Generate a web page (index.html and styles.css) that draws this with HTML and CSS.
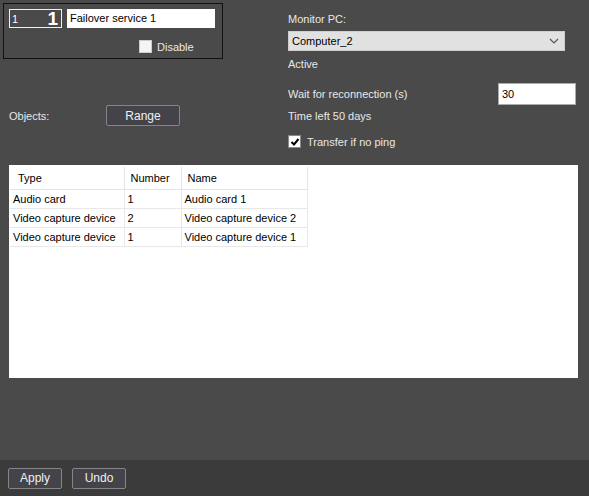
FILE: index.html
```html
<!DOCTYPE html>
<html>
<head>
<meta charset="utf-8">
<link rel="stylesheet" href="styles.css">
</head>
<body>
<div class="page">
  <div class="main">
    <div class="top">
      <div class="left">
        <div class="idbox">
          <div class="idrow">
            <div class="numfield"><span class="nsmall">1</span><span class="nbig">1</span></div>
            <div class="namefield">Failover service 1</div>
          </div>
          <div class="disrow">
            <span class="cb"></span><span class="lbl">Disable</span>
          </div>
        </div>
        <div class="objrow">
          <span class="lbl objlbl">Objects:</span>
          <button class="btn range">Range</button>
        </div>
      </div>
      <div class="right">
        <div class="lbl monlbl">Monitor PC:</div>
        <div class="select"><span>Computer_2</span>
          <svg class="chev" width="10" height="6" viewBox="0 0 10 6"><path d="M1 1 L5 5 L9 1" fill="none" stroke="#555" stroke-width="1.2"/></svg>
        </div>
        <div class="lbl active">Active</div>
        <div class="waitrow">
          <span class="lbl">Wait for reconnection (s)</span>
          <div class="numinput">30</div>
        </div>
        <div class="lbl timeleft">Time left 50 days</div>
        <div class="pingrow">
          <span class="cb checked"><svg width="10" height="10" viewBox="0 0 10 10"><path d="M1.5 5 L4 7.5 L8.5 2" fill="none" stroke="#000" stroke-width="2"/></svg></span>
          <span class="lbl">Transfer if no ping</span>
        </div>
      </div>
    </div>
    <div class="tablewrap">
      <table class="grid">
        <colgroup><col class="c1"><col class="c2"><col class="c3"></colgroup>
        <thead>
          <tr><th class="h1">Type</th><th class="h2">Number</th><th class="h3">Name</th></tr>
        </thead>
        <tbody>
          <tr><td>Audio card</td><td>1</td><td>Audio card 1</td></tr>
          <tr><td>Video capture device</td><td>2</td><td>Video capture device 2</td></tr>
          <tr><td>Video capture device</td><td>1</td><td>Video capture device 1</td></tr>
        </tbody>
      </table>
    </div>
  </div>
  <div class="footer">
    <button class="btn fbtn">Apply</button>
    <button class="btn fbtn">Undo</button>
  </div>
</div>
</body>
</html>
```
FILE: styles.css
```css
html, body {
  margin: 0;
  padding: 0;
}
body {
  background: #4a4a4a;
  font-family: "Liberation Sans", Arial, sans-serif;
  font-size: 11px;
  color: #e6e6e6;
}
.page {
  width: 589px;
  height: 496px;
  display: flex;
  flex-direction: column;
}
.main {
  flex: 1;
  display: flex;
  flex-direction: column;
}
.top {
  display: flex;
  height: 165px;
}
.left {
  width: 288px;
  display: flex;
  flex-direction: column;
}
.idbox {
  margin: 3px 0 0 3px;
  width: 218px;
  height: 54px;
  border: 1px solid #111;
  display: flex;
  flex-direction: column;
}
.idrow {
  display: flex;
  gap: 5px;
  margin: 5px 0 0 5px;
}
.numfield {
  width: 53px;
  height: 19px;
  border: 1px solid #f0f0f0;
  box-sizing: border-box;
  display: flex;
  justify-content: space-between;
  align-items: center;
  padding: 0 3px 0 2px;
  color: #fff;
}
.nsmall {
  font-size: 11px;
}
.nbig {
  font-size: 19px;
  font-weight: bold;
  line-height: 17px;
}
.namefield {
  width: 148px;
  height: 19px;
  background: #fff;
  color: #000;
  line-height: 19px;
  padding-left: 3px;
  box-sizing: border-box;
}
.disrow {
  display: flex;
  align-items: center;
  margin: 12px 0 0 135px;
  gap: 5px;
}
.cb {
  width: 11px;
  height: 11px;
  background: #fff;
  border: 1px solid #8a8a8a;
  display: inline-flex;
  align-items: center;
  justify-content: center;
}
.disrow .cb {
  background: #f4f4f4;
  border-color: #ccc;
}
.lbl {
  color: #e8e8e8;
  white-space: nowrap;
}
.objrow {
  display: flex;
  align-items: center;
  margin: 46px 0 0 9px;
}
.objlbl {
  width: 97px;
}
.btn {
  font-family: "Liberation Sans", Arial, sans-serif;
  font-size: 12px;
  color: #f0f0f0;
  background: #434349;
  border: 1px solid #858585;
  border-radius: 2px;
  padding: 0;
  height: 21px;
}
.range {
  width: 74px;
}
.right {
  flex: 1;
  display: flex;
  flex-direction: column;
  padding-right: 13px;
}
.monlbl {
  margin-top: 12px;
  line-height: 14px;
}
.select {
  margin-top: 5px;
  width: 277px;
  height: 20px;
  background: #e1e1e1;
  border: 1px solid #cfcfcf;
  box-sizing: border-box;
  color: #000;
  display: flex;
  align-items: center;
  justify-content: space-between;
  padding: 0 5px 0 3px;
}
.active {
  margin-top: 6px;
  line-height: 14px;
}
.waitrow {
  margin-top: 12px;
  display: flex;
  align-items: center;
  justify-content: space-between;
  height: 22px;
}
.numinput {
  width: 78px;
  height: 22px;
  background: #fff;
  border: 1px solid #ababab;
  box-sizing: border-box;
  color: #000;
  line-height: 20px;
  padding-left: 3px;
}
.timeleft {
  margin-top: 4px;
  line-height: 14px;
}
.pingrow {
  margin-top: 12px;
  display: flex;
  align-items: center;
  gap: 6px;
}
.tablewrap {
  margin-left: 9px;
  width: 569px;
  height: 213px;
  background: #fff;
  box-sizing: border-box;
  padding: 2px 0 0 1px;
}
.grid {
  border-collapse: collapse;
  table-layout: fixed;
  width: 297px;
  color: #000;
  font-size: 11px;
}
.c1 { width: 114px; }
.c2 { width: 57px; }
.c3 { width: 126px; }
.grid th {
  font-weight: normal;
  text-align: left;
  height: 22px;
  padding: 0 0 0 8px;
  border-right: 1px solid #e4e4e4;
  border-bottom: 1px solid #e4e4e4;
}
.grid th.h2 {
  padding-left: 6px;
}
.grid th.h3 {
  padding-left: 6px;
}
.grid td {
  height: 18px;
  padding: 0 0 0 3px;
  border-right: 1px solid #e8e8e8;
  border-bottom: 1px solid #e8e8e8;
  white-space: nowrap;
  overflow: hidden;
}
.footer {
  height: 36px;
  background: #3b3b3b;
  display: flex;
  align-items: center;
  gap: 10px;
  padding-left: 8px;
}
.fbtn {
  width: 54px;
  height: 21px;
}
```
